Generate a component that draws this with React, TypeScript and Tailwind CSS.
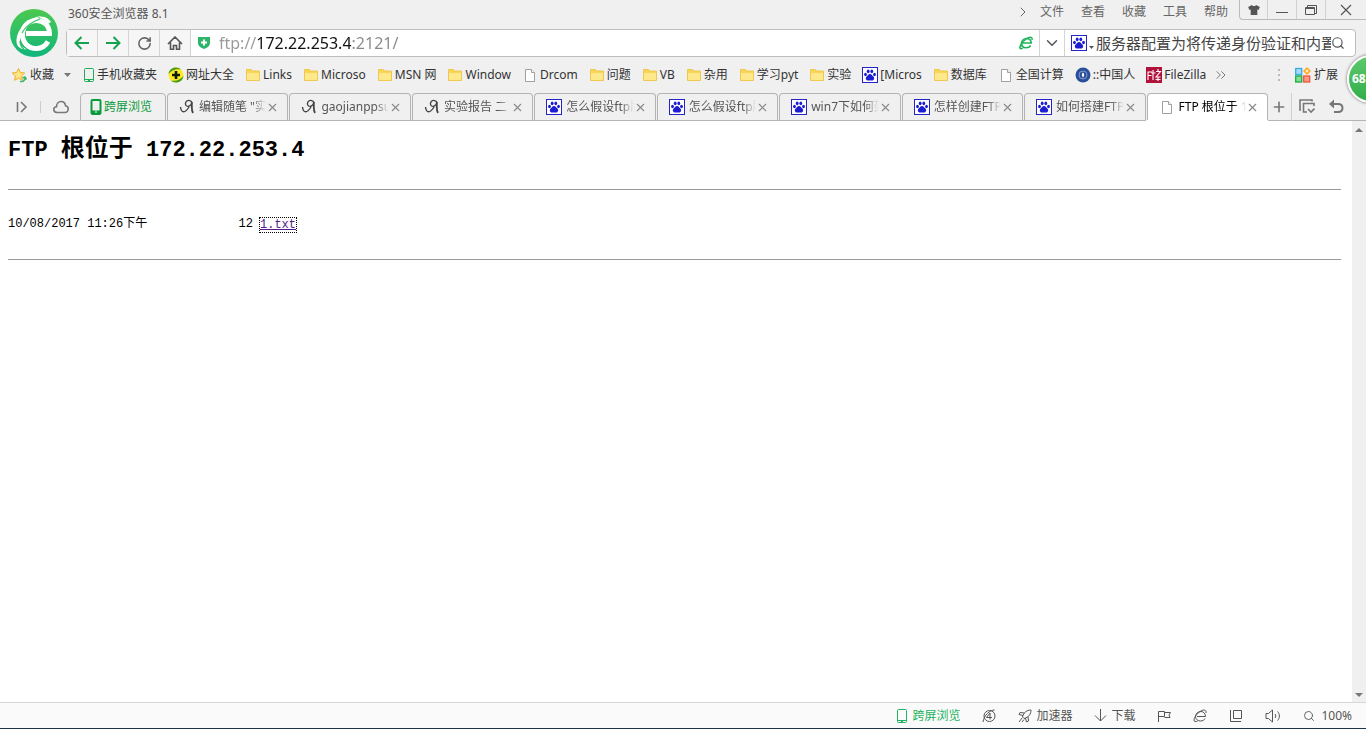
import type { ReactNode } from 'react';
import { ChevronDown, ChevronRight, ChevronsRight, Plus, RotateCw, Search, X } from 'lucide-react';

interface IconProps {
  className?: string;
}

function LogoIcon() {
  return (
    <svg width="48" height="48" viewBox="0 0 48 48" fill="none">
      <defs>
        <linearGradient id="logo" x1="0" y1="0" x2="0" y2="1">
          <stop offset="0" stopColor="#4cc94f" />
          <stop offset="1" stopColor="#10b67c" />
        </linearGradient>
      </defs>
      <circle cx="24" cy="24" r="24" fill="url(#logo)" />
      <path d="M16 24.500h23.500c0-8-6-13-13-13-8 0-14 5.500-14 14s6 14 14 14c5 0 9-2.500 11.500-7" stroke="#fff" strokeWidth="5" />
      <path d="M29 8c4-1 9 0 12 5l-3 2c-2-4-6-5-9-7z" fill="#fff" />
      <path d="M32 7C20 8 6 19 6.500 33c.3 5 5 8 10 7-5-2-7-5-6.500-9C11 21 20 11 32 7z" fill="#fff" />
      <path d="M14 40c-3-2-4-5-4-8M12 24c3-6 9-11 18-14" stroke="#35c062" strokeWidth="1.200" />
    </svg>
  );
}

function BrowserIcon({ className = 'text-[#1fb45c]' }: IconProps) {
  return (
    <svg width="14" height="14" viewBox="0 0 14 14" fill="none" stroke="currentColor" strokeWidth="1.600" className={className}>
      <path d="M3.500 7h8.800C12 4 10 2.500 7.500 2.500 4.500 2.500 2.500 4.800 2.500 7.300c0 2.700 2 4.500 4.700 4.500 2 0 3.600-.8 4.500-2.300" />
      <path d="M13 3.800c.4-2.300-.8-3-3-2.200C6.500 2.800 1.800 7 1 10.800c-.3 1.800.8 2.300 2.800 1.300" />
    </svg>
  );
}

function PhoneIcon({ className = 'text-[#1fae57]' }: IconProps) {
  return (
    <svg width="12" height="16" viewBox="0 0 12 16" fill="none" stroke="currentColor" className={className}>
      <rect x="1.500" y="1.500" width="9" height="13" rx="1" />
      <path d="M2 12.500h8M5 13.500h2" />
    </svg>
  );
}

function BoldPhoneIcon() {
  return (
    <svg width="12" height="16" viewBox="0 0 12 16" fill="none">
      <rect x="1.500" y="1" width="9" height="14" rx="1" stroke="#0a9a3c" strokeWidth="2" />
      <path d="M1 13h10" stroke="#0a9a3c" strokeWidth="3" />
      <path d="M5 13h2" stroke="#fff" />
    </svg>
  );
}

function StarIcon() {
  return (
    <svg width="16" height="16" viewBox="0 0 16 16" fill="none">
      <path d="M7.500 1.500l1.800 4 4.400.5-3.200 3 .8 4.300-3.800-2.100-3.900 2.100.8-4.300-3.200-3L5.700 5.500z" fill="#ffe680" stroke="#eeae2c" />
      <path d="M9 14.500c3 .5 5-1 5-4M11.500 11l2.500-1 1.500 2.500" stroke="#3bb56a" strokeWidth="1.500" />
    </svg>
  );
}

function PlusBallIcon() {
  return (
    <svg width="16" height="16" viewBox="0 0 16 16" fill="none">
      <circle cx="8" cy="8" r="7.500" fill="#ffe924" />
      <path d="M.5 7C1 3 4 .5 8 .5c2 0 4 .7 5 2C8 1.500 4 3 .5 7zM15.500 9c-.5 4-3.500 6.500-7.500 6.500-2 0-4-.7-5-2 5 1 9-.5 12.500-4.500z" fill="#4a9c1a" />
      <path d="M8 4v8M4 8h8" stroke="#0c1c08" strokeWidth="2.600" />
    </svg>
  );
}

function FolderIcon() {
  return (
    <svg width="16" height="16" viewBox="0 0 16 16" fill="none">
      <path d="M1.500 2.500h5l1 1.500h7v9.500h-13z" fill="#f8d457" stroke="#eec84f" />
      <path d="M2 6h12v7H2z" fill="#ffe88c" />
    </svg>
  );
}

function PageIcon() {
  return (
    <svg width="16" height="16" viewBox="0 0 16 16" fill="#fff" stroke="#a0a0a0">
      <path d="M3.500 2.500h6l3 3v9h-9z" />
      <path d="M9.500 2.500v3h3" />
    </svg>
  );
}

function BaiduIcon() {
  return (
    <svg width="16" height="16" viewBox="0 0 16 16">
      <rect x=".5" y=".5" width="15" height="15" fill="#fff" stroke="#2424c8" />
      <g fill="#1c1cd0">
        <ellipse cx="3.500" cy="7.500" rx="1.400" ry="1.800" />
        <ellipse cx="6.200" cy="4.300" rx="1.400" ry="1.900" />
        <ellipse cx="9.800" cy="4.300" rx="1.400" ry="1.900" />
        <ellipse cx="12.500" cy="7.500" rx="1.400" ry="1.800" />
        <path d="M8 7c1.800 0 2.200 1.700 3.300 2.600C12.800 11 12.300 13.600 10 13.600H6c-2.300 0-2.800-2.600-1.300-4C5.800 8.700 6.200 7 8 7z" />
      </g>
    </svg>
  );
}

function BadgeIcon() {
  return (
    <svg width="16" height="16" viewBox="0 0 16 16" fill="none">
      <circle cx="8" cy="8" r="7.500" fill="#2a509a" />
      <circle cx="8" cy="8" r="4" stroke="#7f9bd0" />
      <path d="M8 5.500c1.600 1.300 1.600 3.500 0 5-1.600-1.500-1.600-3.700 0-5z" fill="#fff" />
    </svg>
  );
}

function FileZillaIcon() {
  return (
    <svg width="16" height="16" viewBox="0 0 16 16" fill="none">
      <rect width="16" height="16" fill="#b0123c" />
      <path d="M2 13V5h4M2 8.500h3.500M7 3v10M5.500 6h4M10 4.500h4.500L10 10h4.500M9.500 12.500h5M12 2v2M12 10v4" stroke="#fff" strokeWidth="1.100" />
    </svg>
  );
}

function BlogIcon() {
  return (
    <svg width="16" height="16" viewBox="0 0 16 16" fill="none" stroke="#444" strokeWidth="1.400">
      <path d="M1.500 8c.3 3 1.500 4.800 3.200 4.800C7 12.800 8.500 10.500 10 8" />
      <path d="M13 3.500C12 1.500 9.500.8 7.800 2 6 3.300 6 6 7.600 7c1.800 1 4.300 0 5.400-3.500" />
      <path d="M12.800 3v5c0 2.500.3 4.500 1.200 6" strokeWidth="1.800" />
    </svg>
  );
}

function ExtensionsIcon() {
  return (
    <svg width="16" height="16" viewBox="0 0 16 16">
      <rect x=".7" y="1.500" width="6" height="6" fill="#a4ddfa" stroke="#3aa8e6" strokeWidth="1.300" />
      <rect x=".7" y="9" width="6" height="6" fill="#7ee092" stroke="#1fac43" strokeWidth="1.300" />
      <rect x="8.700" y="9" width="6" height="6" fill="#ff9a86" stroke="#f0553c" strokeWidth="1.300" />
      <path d="M12 0l4 4-4 4-4-4z" fill="#ffa821" />
      <path d="M12 2.500v3M10.500 4h3" stroke="#fff" />
    </svg>
  );
}

const bookmarks: { icon: ReactNode; label: string }[] = [
  { icon: <PhoneIcon />, label: '手机收藏夹' },
  { icon: <PlusBallIcon />, label: '网址大全' },
  { icon: <FolderIcon />, label: 'Links' },
  { icon: <FolderIcon />, label: 'Microso' },
  { icon: <FolderIcon />, label: 'MSN 网' },
  { icon: <FolderIcon />, label: 'Window' },
  { icon: <PageIcon />, label: 'Drcom' },
  { icon: <FolderIcon />, label: '问题' },
  { icon: <FolderIcon />, label: 'VB' },
  { icon: <FolderIcon />, label: '杂用' },
  { icon: <FolderIcon />, label: '学习pyt' },
  { icon: <FolderIcon />, label: '实验' },
  { icon: <BaiduIcon />, label: '[Micros' },
  { icon: <FolderIcon />, label: '数据库' },
  { icon: <PageIcon />, label: '全国计算' },
  { icon: <BadgeIcon />, label: '::中国人' },
  { icon: <FileZillaIcon />, label: 'FileZilla' },
];

const tabs: { icon: ReactNode; label: string; active?: boolean }[] = [
  { icon: <BlogIcon />, label: '编辑随笔 "实' },
  { icon: <BlogIcon />, label: 'gaojianppsu' },
  { icon: <BlogIcon />, label: '实验报告 二' },
  { icon: <BaiduIcon />, label: '怎么假设ftp服' },
  { icon: <BaiduIcon />, label: '怎么假设ftp服' },
  { icon: <BaiduIcon />, label: 'win7下如何架' },
  { icon: <BaiduIcon />, label: '怎样创建FTP' },
  { icon: <BaiduIcon />, label: '如何搭建FTP' },
  { icon: <PageIcon />, label: 'FTP 根位于 1', active: true },
];

function TitleBar() {
  return (
    <div className="flex h-7 items-start justify-between">
      <span className="pt-1 pl-0.5 text-xs leading-5 text-[#555]">360安全浏览器 8.1</span>
      <div className="flex">
        <nav className="flex h-6 items-center gap-[17px] pr-[11px] text-xs text-[#666]">
          <ChevronRight size={16} strokeWidth={1.5} className="-mr-2" />
          <a href="#">文件</a>
          <a href="#">查看</a>
          <a href="#">收藏</a>
          <a href="#">工具</a>
          <a href="#">帮助</a>
        </nav>
        <div className="flex h-5 divide-x divide-[#d0d0d0] rounded-bl border-b border-l border-[#bbb] text-[#555]">
          <button className="flex w-7 items-center justify-center" aria-label="Skin">
            <svg width="12" height="10" viewBox="0 0 14 12" fill="currentColor">
              <path d="M4.500 0L0 2.500 1.500 6 3 5.300V12h8V5.300l1.500.7L14 2.500 9.500 0C9 1.500 5 1.500 4.500 0z" />
            </svg>
          </button>
          <button className="flex w-[29px] items-center justify-center" aria-label="Minimize">
            <svg width="12" height="12" viewBox="0 0 12 12" stroke="currentColor">
              <path d="M0 8.500h12" />
            </svg>
          </button>
          <button className="flex w-[29px] items-center justify-center" aria-label="Restore">
            <svg width="12" height="12" viewBox="0 0 12 12" fill="none" stroke="currentColor">
              <path d="M2.500 3V1.500h9v8H10M.5 3.500h9v7h-9zM.5 4.500h9" />
            </svg>
          </button>
          <button className="flex w-10 items-center justify-center" aria-label="Close">
            <svg width="12" height="12" viewBox="0 0 12 12" stroke="currentColor" strokeWidth="1.200">
              <path d="M1 1l10 10M11 1L1 11" />
            </svg>
          </button>
        </div>
      </div>
    </div>
  );
}

function AddressBar() {
  return (
    <div className="mr-2.5 flex h-7 divide-x divide-[#d4d4d4] rounded-sm border border-[#bdbdbd] bg-white">
      <button className="flex w-[31px] items-center justify-center bg-[#f6f6f6] text-[#16a350]" aria-label="Back">
        <svg width="16" height="14" viewBox="0 0 16 14" fill="none" stroke="currentColor" strokeWidth="2">
          <path d="M15 7H2M7.500 1L1.500 7l6 6" />
        </svg>
      </button>
      <button className="flex w-[31px] items-center justify-center bg-[#f6f6f6] text-[#16a350]" aria-label="Forward">
        <svg width="16" height="14" viewBox="0 0 16 14" fill="none" stroke="currentColor" strokeWidth="2">
          <path d="M1 7h13M8.500 1l6 6-6 6" />
        </svg>
      </button>
      <button className="flex w-[31px] items-center justify-center bg-[#f6f6f6] text-[#666]" aria-label="Reload">
        <RotateCw size={15} strokeWidth={2.5} />
      </button>
      <button className="flex w-[31px] items-center justify-center bg-[#f6f6f6] text-[#555]" aria-label="Home">
        <svg width="16" height="14" viewBox="0 0 16 14" fill="none" stroke="currentColor" strokeWidth="1.600">
          <path d="M1 8l7-7 7 7M3.500 6.500v6.700h3V9.500h3v3.700h3V6.500" />
        </svg>
      </button>
      <div className="flex min-w-0 flex-1 items-center gap-2 pr-1.5 pl-1.5">
        <svg width="14" height="14" viewBox="0 0 14 14" fill="none">
          <path d="M1 1h12v6c0 3-3 5-6 6-3-1-6-3-6-6z" fill="#2fb569" />
          <path d="M7 3.500v6M4 6.500h6" stroke="#fff" strokeWidth="2" />
        </svg>
        <input
          aria-label="Address"
          defaultValue="ftp://172.22.253.4:2121/"
          className="min-w-0 flex-1 bg-[linear-gradient(90deg,#999_37px,#111_37px,#111_132px,#888_132px)] bg-clip-text text-base text-transparent outline-none"
        />
        <BrowserIcon />
      </div>
      <button className="flex w-[25px] items-center justify-center text-[#555]" aria-label="History">
        <ChevronDown size={18} />
      </button>
      <div className="flex w-[290px] items-center pr-2.5 pl-1.5">
        <BaiduIcon />
        <svg width="9" height="16" viewBox="0 0 9 16" fill="#555">
          <path d="M2 11h5l-2.500 3z" />
        </svg>
        <input
          aria-label="Search"
          defaultValue="服务器配置为将传递身份验证和内置"
          className="min-w-0 flex-1 text-[15px] text-[#444] outline-none"
        />
        <button aria-label="Go" className="text-[#555]">
          <Search size={14} />
        </button>
      </div>
    </div>
  );
}

function BookmarkBar() {
  return (
    <div className="flex h-[30px] items-center pr-7 pl-[11px] text-xs whitespace-nowrap text-[#333]">
      <a href="#" className="flex items-center gap-[3px]">
        <StarIcon />
        收藏
      </a>
      <svg width="7" height="4" viewBox="0 0 7 4" fill="#777" className="mr-3 ml-2.5">
        <path d="M0 0h7L3.500 4z" />
      </svg>
      <div className="flex flex-1 items-center gap-[11px]">
        {bookmarks.map((b) => (
          <a key={b.label} href="#" className="flex items-center gap-0.5">
            {b.icon}
            {b.label}
          </a>
        ))}
        <ChevronsRight size={16} strokeWidth={1.5} className="-ml-1 text-[#777]" />
      </div>
      <svg width="3" height="12" viewBox="0 0 3 12" fill="#bbb" className="mr-3.5">
        <path d="M0 0h2v2H0zM0 5h2v2H0zM0 10h2v2H0z" />
      </svg>
      <a href="#" className="flex items-center gap-[3px]">
        <ExtensionsIcon />
        扩展
      </a>
    </div>
  );
}

function TabBar() {
  return (
    <div className="flex h-[31px] items-end text-xs">
      <div className="flex h-7 w-20 items-center border-b border-[#b4b4b4] pl-4 text-[#777]">
        <svg width="12" height="12" viewBox="0 0 12 12" fill="none" stroke="currentColor" strokeWidth="1.600">
          <path d="M1.500 1v10M5 1l5 5-5 5" />
        </svg>
        <span className="mx-3 h-3 w-px bg-[#ccc]" />
        <svg width="16" height="14" viewBox="0 0 16 14" fill="none" stroke="currentColor" strokeWidth="1.600">
          <path d="M4 12.500C2 12.500.8 11.200.8 9.600S2 6.800 3.500 6.800C3.500 3.500 5.500 1.500 8 1.500s4.300 1.800 4.500 4.300c1.700.2 2.700 1.500 2.700 3.200s-1.300 3.500-3.200 3.500z" />
        </svg>
      </div>
      <button className="flex h-7 w-[86px] items-center gap-0.5 rounded-t border border-[#b4b4b4] pl-[9px] text-[#0a9a3c]">
        <BoldPhoneIcon />
        跨屏浏览
      </button>
      {tabs.map((t, i) => (
        <div key={i} className="flex h-7 min-w-0 flex-1 border-b border-[#b4b4b4] pl-px has-[.bg-white]:border-white">
          <div
            className={
              t.active
                ? 'flex min-w-0 flex-1 items-center rounded-t border border-b-0 border-[#b4b4b4] bg-white pr-2 pl-[11px] text-black'
                : 'flex min-w-0 flex-1 items-center rounded-t border border-b-0 border-[#b4b4b4] pr-2 pl-[11px] text-[#555]'
            }
          >
            <span className="shrink-0">{t.icon}</span>
            <a
              href="#"
              className="ml-1 min-w-0 flex-1 overflow-hidden whitespace-nowrap [mask-image:linear-gradient(90deg,#000_80%,transparent)]"
            >
              {t.label}
            </a>
            <button aria-label="Close tab" className="text-[#888]">
              <X size={13} strokeWidth={2} />
            </button>
          </div>
        </div>
      ))}
      <div className="flex h-7 w-[98px] items-center border-b border-[#b4b4b4] text-[#777]">
        <button aria-label="New tab" className="flex w-[23px] justify-center">
          <Plus size={16} strokeWidth={2.400} />
        </button>
        <span className="h-7 w-px bg-[#d0d0d0]" />
        <button aria-label="Tab list" className="ml-[7px]">
          <svg width="16" height="15" viewBox="0 0 16 15" fill="none" stroke="currentColor" strokeWidth="1.600">
            <path d="M2 11H1V1h12v1.500M15 7V4.500H4.500V13H8M9 10l3 3 3.500-3.500" />
          </svg>
        </button>
        <button aria-label="Undo close" className="ml-3.5">
          <svg width="15" height="15" viewBox="0 0 15 15" fill="none" stroke="currentColor" strokeWidth="2">
            <path d="M2 5h7c3 0 4.500 1.800 4.500 4S12 13 9 13H5" />
            <path d="M0 5l5-4.500v9z" fill="currentColor" stroke="none" />
          </svg>
        </button>
      </div>
    </div>
  );
}

function Listing() {
  return (
    <main className="flex min-h-0 flex-1 bg-white">
      <div className="flex-1 pt-[13px] pr-[11px] pl-2 font-['Liberation_Mono','Noto_Sans_CJK_SC',monospace] text-black">
        <h1 className="text-[22px] leading-8 font-bold">
          FTP <span className="text-2xl leading-8 font-semibold">根位于</span> 172.22.253.4
        </h1>
        <hr className="mt-[22px] border-[#999]" />
        <div className="flex py-6 text-xs leading-[21px]">
          <span className="w-[140px]">10/08/2017 11:26下午</span>
          <span className="w-[105px] text-right">12</span>
          <a href="#" className="ml-[7px] self-center text-[#551a8b] underline outline-1 outline-black outline-dotted leading-[14px]">
            1.txt
          </a>
        </div>
        <hr className="border-[#999]" />
      </div>
      <div className="flex w-3.5 flex-col items-center justify-between bg-[#f0f0f0] py-1">
        <svg width="8" height="10" viewBox="0 0 8 10" fill="#777">
          <path d="M4 3l4 4H0z" />
        </svg>
        <svg width="8" height="6" viewBox="0 0 8 6" fill="#777">
          <path d="M0 1h8L4 5z" />
        </svg>
      </div>
    </main>
  );
}

function StatusBar() {
  return (
    <footer className="flex h-[27px] items-center justify-end gap-[22px] border-t border-b border-t-[#d6d6d6] border-b-[#1d3347] bg-[#fafafa] pr-3.5 text-xs text-[#555]">
      <button className="flex items-center gap-1 text-[#1db35f]">
        <PhoneIcon className="text-[#1db35f]" />
        跨屏浏览
      </button>
      <button aria-label="Flash">
        <svg width="14" height="14" viewBox="0 0 14 14" fill="none" stroke="currentColor">
          <circle cx="7.500" cy="7" r="5.500" />
          <path d="M12.500 1C8 1 2 6 1 13M4.500 8.500L8 4v6.500M4.500 8.500h5.500" />
        </svg>
      </button>
      <button className="flex items-center gap-1">
        <svg width="14" height="14" viewBox="0 0 14 14" fill="none" stroke="currentColor">
          <path d="M13 1C9 1 6 3 4.500 8L6 9.500C11 8 13 5 13 1zM6.500 4L2 3.500l-1 2 4 1M10 7.500l.5 4.500-2 1-1-4M4 9l-3 4M6 10.500L4 13" />
        </svg>
        加速器
      </button>
      <button className="flex items-center gap-1">
        <svg width="13" height="13" viewBox="0 0 13 13" fill="none" stroke="currentColor">
          <path d="M6.500 0v12M1 6.500L6.500 12 12 6.500" />
        </svg>
        下载
      </button>
      <button aria-label="Report">
        <svg width="14" height="14" viewBox="0 0 14 14" fill="none" stroke="currentColor">
          <path d="M1.500 13V2.500h6v5h-6M7.500 3.500h6L12 6l1 2.500H7.500" />
        </svg>
      </button>
      <button aria-label="Engine">
        <svg width="14" height="14" viewBox="0 0 14 14" fill="none" stroke="currentColor">
          <path d="M4 7.500h8.500C12.500 4 10 2.500 8 2.500 5 2.500 2.500 4.500 2.500 7.500S5 12 7.500 12c2 0 4-1 4.500-2.500" />
          <path d="M13 4c.5-3-1.500-3.500-4-2.500C5.500 3 1.500 7 1 11c0 2 1.500 2 3.500 1" />
        </svg>
      </button>
      <button aria-label="Windows">
        <svg width="14" height="14" viewBox="0 0 14 14" fill="none" stroke="currentColor">
          <path d="M4.500 1.500h8v8h-8zM1.500 1v11.500H12" />
        </svg>
      </button>
      <button aria-label="Sound">
        <svg width="16" height="14" viewBox="0 0 16 14" fill="none" stroke="currentColor">
          <path d="M1 4.500h2.500L7.500 1v12L3.500 9.500H1zM10 5c1 1.200 1 2.800 0 4M12.500 2.500c2.500 2.500 2.500 6.500 0 9" />
        </svg>
      </button>
      <button className="flex items-center gap-1.5">
        <Search size={12} strokeWidth={1.8} />
        100%
      </button>
    </footer>
  );
}

export default function App() {
  return (
    <div className="relative flex h-screen flex-col overflow-hidden bg-[#f0f0f0] font-['Noto_Sans','Noto_Sans_CJK_SC',sans-serif]">
      <header>
        <div className="flex">
          <div className="w-[66px] shrink-0 pt-[9px] pl-2.5">
            <LogoIcon />
          </div>
          <div className="flex min-w-0 flex-1 flex-col gap-px">
            <TitleBar />
            <AddressBar />
          </div>
        </div>
        <div className="pt-[3px]">
          <BookmarkBar />
        </div>
        <TabBar />
      </header>
      <Listing />
      <StatusBar />

      {/* Accelerator ball */}
      <button className="absolute top-[55px] -right-[29px] flex h-12 w-12 items-center rounded-full border-2 border-white bg-linear-to-b from-[#5cc86a] to-[#2fae4a] pl-[3px] text-xs font-bold text-white shadow-[0_0_3px_#555]">
        68
      </button>
    </div>
  );
}
